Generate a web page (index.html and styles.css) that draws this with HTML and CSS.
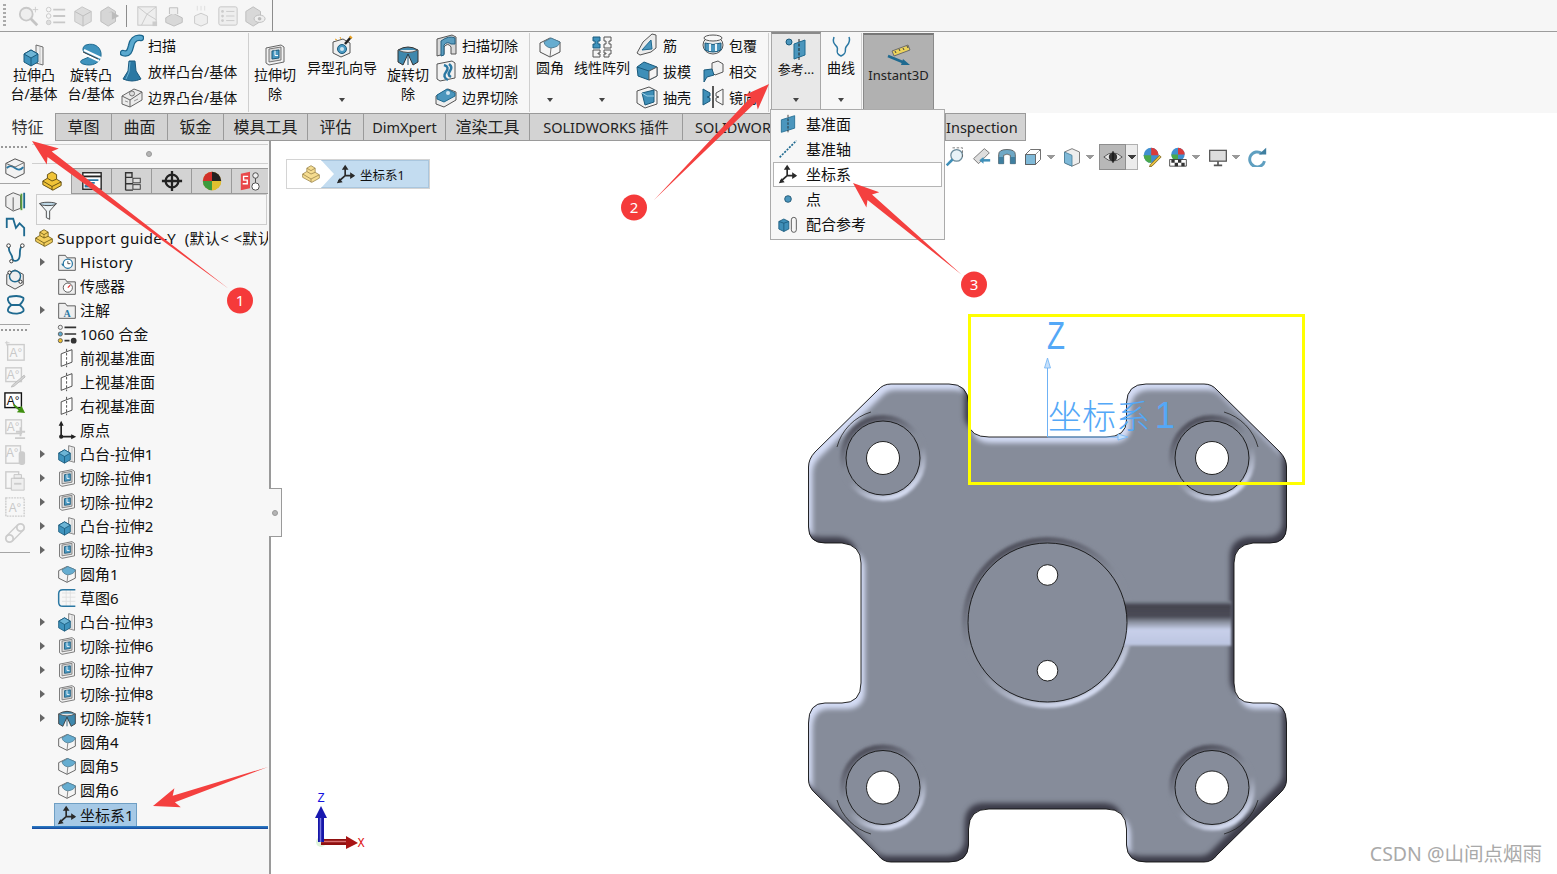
FILE: index.html
```html
<!DOCTYPE html>
<html lang="zh-CN">
<head>
<meta charset="utf-8">
<title>SOLIDWORKS</title>
<link rel="stylesheet" href="styles.css">
</head>
<body>
<svg class="defs" aria-hidden="true">
  <symbol id="i-boss" viewBox="0 0 24 24"><path d="M14 2l7 2v18l-7-2z" fill="#f0f0f0" stroke="#6d6d6d"/><path d="M18 4v17" stroke="#bbb"/><path d="M2 11l7-4 7 4v8l-7 4-7-4z" fill="#3f93bd" stroke="#1a5a7c"/><path d="M2 11l7 4 7-4-7-4z" fill="#6db5d6" stroke="#1a5a7c"/><path d="M9 15v8" stroke="#1a5a7c"/></symbol>
  <symbol id="i-rev" viewBox="0 0 24 24"><path d="M7 2c9-3 16 3 15 11-1 7-9 11-18 8-3-1-3-3-1-4l7-3L5 9C3 7 4 3 7 2z" fill="#3f93bd" stroke="#1f6a90"/><path d="M3 10l17 8M5 7l17 8" stroke="#fff" stroke-width="2"/><path d="M4 9l15 7" stroke="#444"/></symbol>
  <symbol id="i-sweep" viewBox="0 0 24 24"><path d="M3 20c6 2 7-3 8-7 1-5 4-9 10-8" fill="none" stroke="#1b668d" stroke-width="6.5" stroke-linecap="round"/><path d="M3 20c6 2 7-3 8-7 1-5 4-9 10-8" fill="none" stroke="#5aa9cf" stroke-width="4" stroke-linecap="round"/></symbol>
  <symbol id="i-loft" viewBox="0 0 24 24"><path d="M9 2h6l1 10 5 8q-9 4-18 0l5-8z" fill="#2b78a3" stroke="#1b5a7f"/><path d="M10 3l-1 10-3 7" fill="none" stroke="#69b0d2"/></symbol>
  <symbol id="i-bound" viewBox="0 0 24 24"><path d="M2 11l12-7 8 3v8l-12 7-8-3z" fill="#ececec" stroke="#666"/><path d="M2 11l8 4 12-8M10 15v7" fill="none" stroke="#666"/><circle cx="12" cy="8.500" r="2.500" fill="#ddd" stroke="#777"/><path d="M5 16l3 1M14 16l4-2" stroke="#999"/></symbol>
  <symbol id="i-cut" viewBox="0 0 24 24"><path d="M3 5l15-3 3 2v15l-15 3-3-2z" fill="#f2f2f2" stroke="#666"/><path d="M6 6l12-2v13l-12 2z" fill="#d8d8d8" stroke="#777"/><path d="M9 8l7-1v8l-7 1z" fill="#4b9ac3" stroke="#1a5a7c"/><path d="M12 7.500v5h3" fill="none" stroke="#fff"/></symbol>
  <symbol id="i-wiz" viewBox="0 0 24 24"><path d="M3 7l10-3 7 4v10l-9 4-8-4z" fill="#efefef" stroke="#555"/><circle cx="12" cy="14" r="4.500" fill="#4b9ac3" stroke="#1a5a7c"/><circle cx="12" cy="14" r="2" fill="#cfe5f1"/><path d="M15 9l6-7" stroke="#222" stroke-width="2.500"/><path d="M20 3l1.500-1.500" stroke="#e8a020" stroke-width="3"/><path d="M10 2l1 2M5 4l2 1" stroke="#e8a020"/></symbol>
  <symbol id="i-revcut" viewBox="0 0 24 24"><path d="M2 7q10-6 20 0v12l-5 3-5-11-5 11-5-3z" fill="#3f88ad" stroke="#333"/><path d="M2 7q10 5 20 0" fill="#e8e8e8" stroke="#555"/><path d="M12 11v11" stroke="#1a4f6c"/></symbol>
  <symbol id="i-swcut" viewBox="0 0 24 24"><path d="M3 6l15-4 4 2v17h-5v-7q-3-5-7 0v7l-7 2z" fill="#d9d9d9" stroke="#555"/><path d="M7 8q8-6 14-3v6h-4q-4-3-7 1v10l-3 1z" fill="#5b9dbf" stroke="#235f80"/></symbol>
  <symbol id="i-locut" viewBox="0 0 24 24"><path d="M3 5l15-3 3 2v15l-15 3-3-2z" fill="#f1f1f1" stroke="#555"/><path d="M10 6q6 2 2 7t2 8M15 5q4 3 1 7t1 6" fill="none" stroke="#2b78a3" stroke-width="2.500"/></symbol>
  <symbol id="i-bocut" viewBox="0 0 24 24"><path d="M2 11l12-7 8 3v8l-12 7-8-3z" fill="#eee" stroke="#555"/><path d="M3 10l10-6 8 4v3l-11 6-7-3z" fill="#4b96bd" stroke="#1f6a90"/><circle cx="14" cy="8" r="2" fill="#cfe5f1"/></symbol>
  <symbol id="i-fillet" viewBox="0 0 24 24"><path d="M2 8l10-5 10 4v10l-10 5-10-5z" fill="#f5f5f5" stroke="#4f4f4f"/><path d="M6 7l7-4 9 4q-1 5-9 6-6-1-7-6z" fill="#66add0" stroke="#4f7f98"/><path d="M13 13l-1 9" stroke="#777"/></symbol>
  <symbol id="i-pat" viewBox="0 0 24 24"><path d="M3 2h7v4H8v3h2v4H3v-4h2V6H3z" fill="#3f93bd" stroke="#1a5a7c"/><path d="M14 2h7v4h-2v3h2v4h-7V9h2V6h-2zM14 15h7v4h-2v3h-5v-3h2v-1h-2zM3 15h7v3H8v1h2v3H3z" fill="#f5f5f5" stroke="#555"/></symbol>
  <symbol id="i-rib" viewBox="0 0 24 24"><path d="M2 20l6-11 9-8 4 1v13l-5 4-11 3z" fill="#ececec" stroke="#555"/><path d="M7 17l9-10 1 9z" fill="#4b96bd" stroke="#1f6a90"/></symbol>
  <symbol id="i-draft" viewBox="0 0 24 24"><path d="M2 8l7-5 13 5v9l-8 4-11-4z" fill="#3f8fb8" stroke="#1a5a7c"/><path d="M14 12l8-4v9l-8 4z" fill="#f4f4f4" stroke="#555"/><path d="M2 8l12 4" stroke="#1a5a7c"/></symbol>
  <symbol id="i-shell" viewBox="0 0 24 24"><path d="M2 6l12-4 8 4v13l-12 4-8-5z" fill="#f3f3f3" stroke="#555"/><path d="M7 8l12-3v12l-9 3z" fill="#3f8fb8" stroke="#1a5a7c"/><path d="M7 8l5 3h7" fill="none" stroke="#9fd0e6"/></symbol>
  <symbol id="i-wrap" viewBox="0 0 24 24"><ellipse cx="12" cy="12" rx="10" ry="9" fill="#ececec" stroke="#555"/><ellipse cx="12" cy="5" rx="9" ry="3" fill="#f7f7f7" stroke="#555"/><path d="M4 10q8 3 16 0v7q-8 4-16 0z" fill="#4b96bd" stroke="#1a5a7c"/><path d="M9 11v7M15 11v7" stroke="#e9f4fa" stroke-width="2"/></symbol>
  <symbol id="i-inter" viewBox="0 0 24 24"><path d="M11 4l6-2 5 3v8l-8 3-3-3z" fill="#f1f1f1" stroke="#555"/><path d="M3 11l8-1 2 6-7 2-3 5z" fill="#3f8fb8" stroke="#1a5a7c"/></symbol>
  <symbol id="i-mirror" viewBox="0 0 24 24"><path d="M2 4l7 4v3l-3 1 3 1v3l-7 4z" fill="#3f8fb8" stroke="#1a5a7c"/><path d="M22 4l-7 4v3l3 1-3 1v3l7 4z" fill="#f7f7f7" stroke="#555"/><path d="M12 1v22" stroke="#222" stroke-width="1.500"/></symbol>
  <symbol id="i-ref" viewBox="0 0 24 24"><circle cx="5" cy="5" r="3" fill="#4b96bd" stroke="#1a5a7c"/><path d="M10 7l11-4v15l-11 4z" fill="#4b96bd" stroke="#1f6a90"/><path d="M15 2v21" stroke="#222" stroke-dasharray="3 1.500"/></symbol>
  <symbol id="i-curve" viewBox="0 0 24 24"><path d="M5 2c-2 6 1 7 3 10s-3 6 4 9c7-3 3-6 5-9s5-5 3-10" fill="none" stroke="#2b78a3" stroke-width="1.500"/></symbol>
  <symbol id="i-3d" viewBox="0 0 24 24"><path d="M5 8l16-6 2 5L7 13z" fill="#ecd35a" stroke="#6b6b6b"/><path d="M8 8l1 2M12 6l1 2M16 5l1 2M20 3l1 2" stroke="#444"/><path d="M1 13l17 7" stroke="#1f6a90" stroke-width="2.500"/><path d="M16 16l7 6-9 0z" fill="#1f6a90"/></symbol>
  <symbol id="i-plane" viewBox="0 0 24 24"><path d="M4 7l16-5v15L4 22z" fill="#4b96bd" stroke="#1f6a90"/><path d="M12 1v22" stroke="#222" stroke-dasharray="3 1.500"/></symbol>
  <symbol id="i-axis" viewBox="0 0 24 24"><path d="M2 22L22 2" stroke="#1f6a90" stroke-width="2" stroke-dasharray="2.500 1.500"/></symbol>
  <symbol id="i-coord" viewBox="0 0 24 24"><path d="M11 14V5M11 14h10M11 14l-8 7" fill="none" stroke="#2a2a2a" stroke-width="2"/><path d="M11 1l-4 6h8zM23 14l-6-4v8zM1 23l7-1-4-5z" fill="#2a2a2a"/></symbol>
  <symbol id="i-point" viewBox="0 0 24 24"><circle cx="12" cy="12" r="4" fill="#4b96bd" stroke="#1a4f6c"/></symbol>
  <symbol id="i-mate" viewBox="0 0 24 24"><path d="M1 9l6-3 6 3v9l-6 3-6-3z" fill="#3f8fb8" stroke="#1a5a7c"/><path d="M7 11v10M1 9l6 2 6-2" stroke="#1a5a7c" fill="none"/><path d="M16 7a3 3 0 0 1 6 0v12a3 3 0 0 1-6 0V7" fill="none" stroke="#444"/></symbol>
  <symbol id="i-part" viewBox="0 0 24 24"><path d="M2 12l5-3V5l5-3 5 3v5l5 3v4l-9 5-11-6z" fill="#f3cf5e" stroke="#6f5a14"/><path d="M2 12l10 6 10-5M12 18v4M7 9l5 3 5-2M12 12v-3M7 5l5 3 5-3" fill="none" stroke="#6f5a14"/></symbol>
  <symbol id="i-partpale" viewBox="0 0 24 24"><path d="M2 12l5-3V5l5-3 5 3v5l5 3v4l-9 5-11-6z" fill="#f5dc90" stroke="#a08a50"/><path d="M2 12l10 6 10-5M12 18v4M7 9l5 3 5-2M7 5l5 3 5-3" fill="none" stroke="#a08a50"/></symbol>
  <symbol id="i-hist" viewBox="0 0 24 24"><path d="M2 4h8l2 3h10v15H2z" fill="#eee" stroke="#444"/><circle cx="13" cy="14" r="5.500" fill="#fff" stroke="#2b78a3" stroke-width="1.500"/><path d="M13 11v3h3" fill="none" stroke="#333"/><path d="M5 14l3 0-1 3z" fill="#2b78a3"/></symbol>
  <symbol id="i-sensor" viewBox="0 0 24 24"><path d="M2 4h8l2 3h10v15H2z" fill="#eee" stroke="#444"/><circle cx="13" cy="14" r="5.500" fill="#fff" stroke="#444"/><path d="M13 14l3-3" stroke="#d33" stroke-width="1.500"/></symbol>
  <symbol id="i-mat" viewBox="0 0 24 24"><circle cx="4" cy="4" r="2.500" fill="#eee" stroke="#555"/><circle cx="4" cy="12" r="2.500" fill="#5aa9cf" stroke="#555"/><circle cx="4" cy="20" r="2.500" fill="#f0c030" stroke="#555"/><path d="M9 4h14M9 12h14M9 20h6" stroke="#333" stroke-width="2"/><circle cx="20" cy="20" r="3.500" fill="#333"/></symbol>
  <symbol id="i-tplane" viewBox="0 0 24 24"><path d="M5 7l13-5v15L5 22z" fill="#fff" stroke="#333"/><path d="M11.500 1v22" stroke="#333" stroke-dasharray="3 2"/></symbol>
  <symbol id="i-origin" viewBox="0 0 24 24"><path d="M5 20V5M5 20h15" stroke="#222" stroke-width="2"/><path d="M5 1l-3 6h6zM23 20l-6-3v6z" fill="#222"/><circle cx="5" cy="20" r="2.500" fill="#222"/></symbol>
  <symbol id="i-sketch" viewBox="0 0 24 24"><path d="M6 6h16M6 11h16M6 16h16M11 2v20M16 2v20" stroke="#ddd"/><path d="M22 2H7Q2 2 2 7v10q0 5 5 5h15" fill="none" stroke="#2b78a3" stroke-width="1.800"/></symbol>
  <symbol id="i-fm" viewBox="0 0 24 24"><path d="M2 7l10-5 10 4v12l-10 5-10-5z" fill="#f2f2f2" stroke="#444"/><path d="M3 12q4-4 9 0t9-1" fill="none" stroke="#2b78a3" stroke-width="2"/><path d="M2 7l10 4 10-5" fill="none" stroke="#666"/></symbol>
  <symbol id="i-s1" viewBox="0 0 24 24"><path d="M2 7l8-4 8 3v14l-8 3-8-5z" fill="#eee" stroke="#555"/><path d="M19 4v18" stroke="#5a9e3c" stroke-width="2"/><path d="M22 3v17" stroke="#1f6a90" stroke-width="2"/><path d="M10 8v14" stroke="#555"/></symbol>
  <symbol id="i-s2" viewBox="0 0 24 24"><path d="M3 13V3h7l3 10 4-5 5 5v9" fill="none" stroke="#1f6a90" stroke-width="2"/></symbol>
  <symbol id="i-s3" viewBox="0 0 24 24"><path d="M6 4c-3 6 3 9 3 13 0 5 7 5 8-1 1-5-1-9 3-12" fill="none" stroke="#1f6a90" stroke-width="2"/><circle cx="5" cy="4" r="2" fill="#fff" stroke="#333"/><circle cx="20" cy="4" r="2" fill="#fff" stroke="#333"/><circle cx="8" cy="21" r="1.800" fill="#fff" stroke="#333"/></symbol>
  <symbol id="i-s4" viewBox="0 0 24 24"><path d="M3 7l9-5 9 5v11l-9 5-9-5z" fill="#eee" stroke="#444"/><circle cx="12" cy="9" r="6" fill="none" stroke="#1f6a90" stroke-width="1.500"/><circle cx="6" cy="5" r="1.800" fill="#fff" stroke="#222"/><circle cx="18" cy="15" r="1.800" fill="#fff" stroke="#222"/></symbol>
  <symbol id="i-s5" viewBox="0 0 24 24"><path d="M6 3c-3 1-2 6 2 9-4 3-5 7-2 8 5 2 12 2 15-1 1-2-1-5-4-7 3-3 5-6 4-8-3-2-10-2-15-1zM8 12h9" fill="none" stroke="#1f6a90" stroke-width="2"/></symbol>
  <symbol id="i-a6" viewBox="0 0 24 24"><rect x="2" y="2" width="14" height="18" fill="none" stroke="#ccc" stroke-width="1.500"/><path d="M8 9h14v13H8zM11 5h8v4h-8z" fill="#eee" stroke="#c4c4c4"/><path d="M11 15h8" stroke="#ccc" stroke-width="2"/></symbol>
  <symbol id="i-a8" viewBox="0 0 24 24"><circle cx="6" cy="18" r="4" fill="none" stroke="#ccc" stroke-width="2"/><circle cx="18" cy="6" r="4" fill="none" stroke="#ccc" stroke-width="2"/><path d="M2 16L15 3M9 21L22 8" stroke="#ccc" stroke-width="1.500"/></symbol>
  <symbol id="i-q1" viewBox="0 0 24 24"><circle cx="9" cy="10" r="7" fill="#eee" stroke="#c8c8c8" stroke-width="2"/><path d="M14 15l7 7" stroke="#c4c4c4" stroke-width="3"/><path d="M19 2v6M16 5h6" stroke="#ccc"/></symbol>
  <symbol id="i-q2" viewBox="0 0 24 24"><circle cx="4" cy="5" r="2.500" fill="none" stroke="#c8c8c8"/><circle cx="4" cy="12" r="2.500" fill="none" stroke="#c8c8c8"/><circle cx="4" cy="19" r="2.500" fill="#ddd" stroke="#c8c8c8"/><path d="M9 5h13M9 12h13M9 19h13" stroke="#c8c8c8" stroke-width="2"/></symbol>
  <symbol id="i-q3" viewBox="0 0 24 24"><path d="M3 7l8-5 10 5v11l-9 5-9-5z" fill="#ddd" stroke="#c4c4c4"/><path d="M3 7l9 5 9-5M12 12v11" fill="none" stroke="#bbb"/></symbol>
  <symbol id="i-q4" viewBox="0 0 24 24"><path d="M2 7l8-5 8 5v11l-8 5-8-5z" fill="#d6d6d6" stroke="#bbb"/><path d="M10 8h4v8l8-4-8-5" fill="#bbb"/></symbol>
  <symbol id="i-q5" viewBox="0 0 24 24"><rect x="2" y="2" width="20" height="20" fill="#eee" stroke="#c4c4c4"/><path d="M2 2l10 8 10-8M12 10l-6 12M12 10l10 6" stroke="#c8c8c8" fill="none"/><rect x="18" y="18" width="5" height="5" fill="#ccc"/></symbol>
  <symbol id="i-q6" viewBox="0 0 24 24"><path d="M3 14l8-5 10 5v5l-9 4-9-4z" fill="#d8d8d8" stroke="#bbb"/><path d="M7 10V3h9v7" fill="#eee" stroke="#bbb"/></symbol>
  <symbol id="i-q7" viewBox="0 0 24 24"><path d="M5 12l7-3 7 3v8l-7 3-7-3z" fill="#eee" stroke="#c8c8c8"/><path d="M8 1v5M12 1v5M16 1v5" stroke="#ddd"/></symbol>
  <symbol id="i-q8" viewBox="0 0 24 24"><rect x="2" y="2" width="20" height="20" rx="2" fill="#eee" stroke="#c4c4c4"/><path d="M10 7h9M10 12h9M10 17h9" stroke="#c8c8c8"/><circle cx="6" cy="7" r="1.500" fill="#ccc"/><circle cx="6" cy="12" r="1.500" fill="#ccc"/><circle cx="6" cy="17" r="1.500" fill="#ccc"/></symbol>
  <symbol id="i-q9" viewBox="0 0 24 24"><path d="M2 7l8-5 8 5v11l-8 5-8-5z" fill="#d8d8d8" stroke="#bbb"/><ellipse cx="17" cy="15" rx="6" ry="4" fill="#eee" stroke="#bbb"/><circle cx="17" cy="15" r="2" fill="#bbb"/></symbol>
  <symbol id="i-t1" viewBox="0 0 24 24"><path d="M2 12l5-3V5l5-3 5 3v5l5 3v4l-9 5-11-6z" fill="#f0c338" stroke="#5f4c10"/><path d="M2 12l10 6 10-5M12 18v4M7 9l5 3 5-2" fill="none" stroke="#5f4c10"/></symbol>
  <symbol id="i-t2" viewBox="0 0 24 24"><rect x="2" y="3" width="20" height="18" fill="#fff" stroke="#222" stroke-width="1.500"/><path d="M2 7h20" stroke="#222" stroke-width="2"/><path d="M5 11h14M5 14h10" stroke="#2b78a3" stroke-width="2"/><rect x="4" y="16" width="6" height="3" fill="#2b78a3"/></symbol>
  <symbol id="i-t3" viewBox="0 0 24 24"><path d="M5 3h7v5H5zM5 8v14M5 15h8M5 22h8" fill="none" stroke="#333" stroke-width="1.500"/><rect x="13" y="9" width="8" height="5" fill="#ddd" stroke="#333"/><rect x="13" y="16" width="8" height="5" fill="#ddd" stroke="#333"/></symbol>
  <symbol id="i-t4" viewBox="0 0 24 24"><circle cx="12" cy="12" r="7" fill="none" stroke="#222" stroke-width="2.500"/><path d="M12 1v22M1 12h22" stroke="#222" stroke-width="2.500"/></symbol>
  <symbol id="i-t5" viewBox="0 0 24 24"><circle cx="12" cy="12" r="10" fill="#d8a020"/><path d="M12 2a10 10 0 0 1 10 10H12z" fill="#222"/><path d="M2 12a10 10 0 0 1 10-10v10z" fill="#d2302a"/><path d="M2 12a10 10 0 0 0 10 10v-10z" fill="#3c9a3c"/><path d="M22 12a10 10 0 0 1-10 10v-10z" fill="#e0c030"/></symbol>
  <symbol id="i-t6" viewBox="0 0 24 24"><path d="M2 4l10-2v18l-10 2z" fill="#e8484a"/><path d="M10 7H5v4h4v4H4" fill="none" stroke="#fff" stroke-width="1.500"/><circle cx="18" cy="6" r="3" fill="#eee" stroke="#444"/><path d="M18 9v6" stroke="#444"/><circle cx="18" cy="18" r="4" fill="#fff" stroke="#444"/></symbol>
  <symbol id="i-filter" viewBox="0 0 24 24"><path d="M2 3h20l-8 9v10l-4-2v-8z" fill="#eef4f7" stroke="#333"/><ellipse cx="12" cy="3.500" rx="10" ry="2" fill="#bcd7e6" stroke="#333"/></symbol>
  <symbol id="i-v1" viewBox="0 0 24 24"><circle cx="14" cy="10" r="7" fill="#e8f2f7" stroke="#6a8a9a" stroke-width="1.500"/><path d="M9 15l-7 7" stroke="#3f8fb8" stroke-width="3"/><path d="M9 1h12v12" fill="none" stroke="#666" stroke-dasharray="3 2"/></symbol>
  <symbol id="i-v2" viewBox="0 0 24 24"><path d="M3 14L16 2l6 5-13 13z" fill="#ddd" stroke="#666"/><path d="M13 16h10" stroke="#3f8fb8" stroke-width="3"/><path d="M10 16l5-4v8z" fill="#3f8fb8"/></symbol>
  <symbol id="i-v3" viewBox="0 0 24 24"><path d="M2 20V9q0-6 10-6t10 6v11h-6V10q-4-3-8 0v10z" fill="#6fa8c5" stroke="#555"/><path d="M2 12h6v8H2zM16 12h6v8h-6z" fill="#3f7fa0"/></symbol>
  <symbol id="i-v4" viewBox="0 0 24 24"><path d="M3 9l6-6h12v12l-6 6H3z" fill="#fff" stroke="#555"/><path d="M3 9h12v12H3z" fill="#7fb9d8" stroke="#555"/><path d="M15 9l6-6" stroke="#555" stroke-dasharray="2 1"/></symbol>
  <symbol id="i-v5" viewBox="0 0 24 24"><path d="M3 6l9-4 9 4v13l-9 4-9-4z" fill="#eee" stroke="#666"/><path d="M3 6l9 4v13l-9-4z" fill="#7fb9d8" stroke="#4a7f9a"/></symbol>
  <symbol id="i-v6" viewBox="0 0 24 24"><path d="M1 12q11-10 22 0-11 10-22 0z" fill="#e2e2e2" stroke="#444"/><circle cx="12" cy="12" r="5" fill="#333"/><path d="M12 5v14" stroke="#111" stroke-width="1.500"/></symbol>
  <symbol id="i-v7" viewBox="0 0 24 24"><circle cx="11" cy="10" r="9" fill="#3f8fd0"/><path d="M11 1a9 9 0 0 1 9 9H11z" fill="#d93a3a"/><path d="M2 10a9 9 0 0 0 9 9v-9z" fill="#4aa84a"/><path d="M23 12L12 23l-3 1 1-3L21 10z" fill="#e8c040" stroke="#7a6420"/></symbol>
  <symbol id="i-v8" viewBox="0 0 24 24"><circle cx="12" cy="9" r="8" fill="#3f8fd0"/><path d="M12 1a8 8 0 0 1 8 8h-8z" fill="#d93a3a"/><path d="M4 9a8 8 0 0 0 8 8V9z" fill="#4aa84a"/><path d="M2 15h20v8H2z" fill="#fff" stroke="#333"/><path d="M4 15h4v4H4zM12 15h4v4h-4zM8 19h4v4H8zM16 19h4v4h-4z" fill="#333"/></symbol>
  <symbol id="i-v9" viewBox="0 0 24 24"><rect x="2" y="4" width="20" height="13" fill="#ddd" stroke="#555" stroke-width="1.500"/><path d="M12 17v4M7 22h10" stroke="#555" stroke-width="2"/></symbol>
  <symbol id="i-v10" viewBox="0 0 24 24"><path d="M18 8a9 9 0 1 0 3 9" fill="none" stroke="#5f9fc0" stroke-width="3.500"/><path d="M14 9h9V1z" fill="#3f7fa0"/></symbol>
</svg>

<div class="app">
  <header class="qbar">
    <div class="qbar-left">
      <span class="grip-v"></span>
      <svg class="qi"><use href="#i-q1"/></svg>
      <svg class="qi"><use href="#i-q2"/></svg>
      <svg class="qi"><use href="#i-q3"/></svg>
      <svg class="qi"><use href="#i-q4"/></svg>
      <span class="qsep"></span>
      <svg class="qi"><use href="#i-q5"/></svg>
      <svg class="qi"><use href="#i-q6"/></svg>
      <svg class="qi"><use href="#i-q7"/></svg>
      <svg class="qi"><use href="#i-q8"/></svg>
      <svg class="qi"><use href="#i-q9"/></svg>
    </div>
  </header>

  <section class="ribbon">
    <div class="big w58 first"><svg class="ic20"><use href="#i-boss"/></svg><span>拉伸凸<br>台/基体</span></div>
    <div class="big w56"><svg class="ic20"><use href="#i-rev"/></svg><span>旋转凸<br>台/基体</span></div>
    <div class="small w129">
      <div class="sm"><svg class="ic20"><use href="#i-sweep"/></svg>扫描</div>
      <div class="sm"><svg class="ic20"><use href="#i-loft"/></svg>放样凸台/基体</div>
      <div class="sm"><svg class="ic20"><use href="#i-bound"/></svg>边界凸台/基体</div>
    </div>
    <span class="rsep"></span>
    <div class="big w52"><svg class="ic20"><use href="#i-cut"/></svg><span>拉伸切<br>除</span></div>
    <div class="big w82 top"><svg class="ic20"><use href="#i-wiz"/></svg><span>异型孔向导</span><i class="caret"></i></div>
    <div class="big w50"><svg class="ic20"><use href="#i-revcut"/></svg><span>旋转切<br>除</span></div>
    <div class="small w96">
      <div class="sm"><svg class="ic20"><use href="#i-swcut"/></svg>扫描切除</div>
      <div class="sm"><svg class="ic20"><use href="#i-locut"/></svg>放样切割</div>
      <div class="sm"><svg class="ic20"><use href="#i-bocut"/></svg>边界切除</div>
    </div>
    <span class="rsep"></span>
    <div class="big w40 top"><svg class="ic20"><use href="#i-fillet"/></svg><span>圆角</span><i class="caret"></i></div>
    <div class="big w64 top"><svg class="ic20"><use href="#i-pat"/></svg><span>线性阵列</span><i class="caret"></i></div>
    <div class="small w66">
      <div class="sm"><svg class="ic20"><use href="#i-rib"/></svg>筋</div>
      <div class="sm"><svg class="ic20"><use href="#i-draft"/></svg>拔模</div>
      <div class="sm"><svg class="ic20"><use href="#i-shell"/></svg>抽壳</div>
    </div>
    <div class="small w68">
      <div class="sm"><svg class="ic20"><use href="#i-wrap"/></svg>包覆</div>
      <div class="sm"><svg class="ic20"><use href="#i-inter"/></svg>相交</div>
      <div class="sm"><svg class="ic20"><use href="#i-mirror"/></svg>镜向</div>
    </div>
    <span class="rsep"></span>
    <div class="big w50 top pressed"><svg class="ic20"><use href="#i-ref"/></svg><span class="sz13">参考...</span><i class="caret"></i></div>
    <div class="big w40 top"><svg class="ic20"><use href="#i-curve"/></svg><span>曲线</span><i class="caret"></i></div>
    <span class="rsep"></span>
    <div class="big w71 inst"><svg class="ic20"><use href="#i-3d"/></svg><span>Instant3D</span></div>
  </section>

  <nav class="tabs">
    <span class="tab active t55">特征</span>
    <span class="tab t56">草图</span>
    <span class="tab t56">曲面</span>
    <span class="tab t56">钣金</span>
    <span class="tab t84">模具工具</span>
    <span class="tab t56">评估</span>
    <span class="tab t82 lat">DimXpert</span>
    <span class="tab t84">渲染工具</span>
    <span class="tab t153 lat">SOLIDWORKS 插件</span>
    <span class="tab t263 lat left">SOLIDWORKS MBD</span>
    <span class="tab t80 lat end">Inspection</span>
  </nav>

  <div class="workspace">
    <aside class="side">
      <div class="strip">
        <span class="grip"></span>
        <svg class="si"><use href="#i-fm"/></svg>
        <span class="ssep"></span>
        <svg class="si"><use href="#i-s1"/></svg>
        <svg class="si"><use href="#i-s2"/></svg>
        <svg class="si"><use href="#i-s3"/></svg>
        <svg class="si"><use href="#i-s4"/></svg>
        <svg class="si"><use href="#i-s5"/></svg>
        <span class="ssep mid"></span>
        <span class="grip"></span>
        <svg class="si first-a" viewBox="0 0 24 24"><rect x="4" y="5" width="18" height="17" fill="none" stroke="#ccc" stroke-width="1.500"/><text x="13" y="19" class="ag off">A°</text><path d="M3 1v5M1 3h5" stroke="#ccc"/></svg>
        <svg class="si" viewBox="0 0 24 24"><rect x="2" y="2" width="17" height="15" fill="none" stroke="#ccc" stroke-width="1.500"/><text x="10" y="14" class="ag off">A°</text><path d="M22 10L9 21l-1 2 3-1L23 12z" fill="#d5d5d5" stroke="#bbb"/></svg>
        <svg class="si" viewBox="0 0 24 24"><rect x="1" y="1" width="18" height="16" fill="#fff" stroke="#111" stroke-width="1.500"/><text x="10" y="14" class="ag">A°</text><path d="M11 13l6 5 2-3 4 8-9-1 2-2-6-5z" fill="#3f8f10"/></svg>
        <svg class="si" viewBox="0 0 24 24"><rect x="2" y="2" width="17" height="15" fill="none" stroke="#ccc" stroke-width="1.500"/><text x="10" y="14" class="ag off">A°</text><path d="M13 15h10M18 10v10M12 22h11" stroke="#ccc" stroke-width="2"/></svg>
        <svg class="si" viewBox="0 0 24 24"><rect x="2" y="2" width="16" height="19" fill="none" stroke="#ccc" stroke-width="1.500"/><text x="9" y="14" class="ag off">A°</text><rect x="16" y="8" width="7" height="15" rx="3" fill="#ccc"/></svg>
        <svg class="si"><use href="#i-a6"/></svg>
        <svg class="si" viewBox="0 0 24 24"><rect x="2" y="2" width="20" height="20" fill="none" stroke="#ccc" stroke-width="1.500" stroke-dasharray="2 1"/><text x="12" y="17" class="ag off">A°</text></svg>
        <svg class="si"><use href="#i-a8"/></svg>
        <span class="ssep mid"></span>
      </div>
      <div class="fm">
        <div class="fm-head"><span class="dot"></span></div>
        <div class="fm-tabs">
          <span class="ft on"><svg class="ic22"><use href="#i-t1"/></svg></span>
          <span class="ft"><svg class="ic22"><use href="#i-t2"/></svg></span>
          <span class="ft"><svg class="ic22"><use href="#i-t3"/></svg></span>
          <span class="ft"><svg class="ic22"><use href="#i-t4"/></svg></span>
          <span class="ft"><svg class="ic22"><use href="#i-t5"/></svg></span>
          <span class="ft last"><svg class="ic22"><use href="#i-t6"/></svg></span>
        </div>
        <div class="filter"><svg class="ic20"><use href="#i-filter"/></svg></div>
        <div class="tree">
          <div class="row root"><svg class="ti"><use href="#i-part"/></svg><span class="ls">Support guide-Y&nbsp; (默认&lt; &lt;默认</span></div>
          <div class="row"><i class="tw"></i><svg class="ti"><use href="#i-hist"/></svg><span class="ls">History</span></div>
          <div class="row"><i class="tw no"></i><svg class="ti"><use href="#i-sensor"/></svg><span>传感器</span></div>
          <div class="row"><i class="tw"></i><svg class="ti" viewBox="0 0 24 24"><path d="M2 4h8l2 3h10v15H2z" fill="#eee" stroke="#444"/><text x="12" y="20" class="af">A</text></svg><span>注解</span></div>
          <div class="row"><i class="tw no"></i><svg class="ti"><use href="#i-mat"/></svg><span>1060 合金</span></div>
          <div class="row"><i class="tw no"></i><svg class="ti"><use href="#i-tplane"/></svg><span>前视基准面</span></div>
          <div class="row"><i class="tw no"></i><svg class="ti"><use href="#i-tplane"/></svg><span>上视基准面</span></div>
          <div class="row"><i class="tw no"></i><svg class="ti"><use href="#i-tplane"/></svg><span>右视基准面</span></div>
          <div class="row"><i class="tw no"></i><svg class="ti"><use href="#i-origin"/></svg><span>原点</span></div>
          <div class="row"><i class="tw"></i><svg class="ti"><use href="#i-boss"/></svg><span>凸台-拉伸1</span></div>
          <div class="row"><i class="tw"></i><svg class="ti"><use href="#i-cut"/></svg><span>切除-拉伸1</span></div>
          <div class="row"><i class="tw"></i><svg class="ti"><use href="#i-cut"/></svg><span>切除-拉伸2</span></div>
          <div class="row"><i class="tw"></i><svg class="ti"><use href="#i-boss"/></svg><span>凸台-拉伸2</span></div>
          <div class="row"><i class="tw"></i><svg class="ti"><use href="#i-cut"/></svg><span>切除-拉伸3</span></div>
          <div class="row"><i class="tw no"></i><svg class="ti"><use href="#i-fillet"/></svg><span>圆角1</span></div>
          <div class="row"><i class="tw no"></i><svg class="ti"><use href="#i-sketch"/></svg><span>草图6</span></div>
          <div class="row"><i class="tw"></i><svg class="ti"><use href="#i-boss"/></svg><span>凸台-拉伸3</span></div>
          <div class="row"><i class="tw"></i><svg class="ti"><use href="#i-cut"/></svg><span>切除-拉伸6</span></div>
          <div class="row"><i class="tw"></i><svg class="ti"><use href="#i-cut"/></svg><span>切除-拉伸7</span></div>
          <div class="row"><i class="tw"></i><svg class="ti"><use href="#i-cut"/></svg><span>切除-拉伸8</span></div>
          <div class="row"><i class="tw"></i><svg class="ti"><use href="#i-revcut"/></svg><span>切除-旋转1</span></div>
          <div class="row"><i class="tw no"></i><svg class="ti"><use href="#i-fillet"/></svg><span>圆角4</span></div>
          <div class="row"><i class="tw no"></i><svg class="ti"><use href="#i-fillet"/></svg><span>圆角5</span></div>
          <div class="row"><i class="tw no"></i><svg class="ti"><use href="#i-fillet"/></svg><span>圆角6</span></div>
          <div class="row"><i class="tw no"></i><div class="sel"><svg class="ti"><use href="#i-coord"/></svg><span>坐标系1</span></div></div>
        </div>
        <div class="tree-end"></div>
      </div>
      <div class="split"><span class="dot"></span></div>
    </aside>

    <main class="canvas">
      <svg class="model" viewBox="271 141 1286 733" aria-hidden="true">
        <defs>
          <path id="outline" d="M891 384L949 384Q968 384 968.500 403L968.500 423Q970 437 989 437L1106 437Q1126.500 437 1126.500 420L1126.500 403Q1127 384 1146 384L1204 384Q1212 384 1217 390L1280 452Q1286.500 459 1286.500 467L1286.500 527Q1286.500 543 1270 543L1253 543Q1234 545 1234 563L1234 683Q1234 703 1253 703L1270 703Q1286.500 703 1286.500 723L1286.500 780Q1286.500 787 1280 793L1217 855Q1212 862 1204 862L1146 862Q1127 862 1126.500 845L1126.500 829Q1126 809 1106 809L989 809Q969 809 968.500 829L968.500 845Q968 862 949 862L891 862Q883 862 878 855L815 793Q808.500 787 808.500 780L808.500 723Q808.500 703 825 703L842 703Q861 703 861 683L861 563Q861 545 842 543L825 543Q808.500 543 808.500 527L808.500 467Q808.500 459 815 452L878 390Q883 384 891 384Z"/>
          <filter id="bevel" x="-6%" y="-6%" width="112%" height="112%" color-interpolation-filters="sRGB">
            <feFlood flood-color="#000" result="flood"/>
            <feComposite in="flood" in2="SourceAlpha" operator="out" result="inv"/>
            <feOffset in="inv" dx="4" dy="6" result="o1"/>
            <feGaussianBlur in="o1" stdDeviation="2.600" result="b1"/>
            <feFlood flood-color="#d4dcf5"/>
            <feComposite in2="b1" operator="in"/>
            <feComposite in2="SourceAlpha" operator="in" result="light"/>
            <feOffset in="inv" dx="-4" dy="-6" result="o2"/>
            <feGaussianBlur in="o2" stdDeviation="2.600" result="b2"/>
            <feFlood flood-color="#3d3d4a"/>
            <feComposite in2="b2" operator="in"/>
            <feComposite in2="SourceAlpha" operator="in" result="dark"/>
            <feMerge><feMergeNode in="SourceGraphic"/><feMergeNode in="light"/><feMergeNode in="dark"/></feMerge>
          </filter>
          <filter id="soft" x="-20%" y="-20%" width="140%" height="140%"><feGaussianBlur stdDeviation="1.500"/></filter>
          <filter id="soft2" x="-5%" y="-10%" width="110%" height="120%"><feGaussianBlur stdDeviation="0.800"/></filter>
          <linearGradient id="ring" x1="0.200" y1="0" x2="0.700" y2="1">
            <stop offset="0" stop-color="#474753"/><stop offset="0.450" stop-color="#868c9a"/><stop offset="0.600" stop-color="#868c9a"/><stop offset="1" stop-color="#dbe2f8"/>
          </linearGradient>
          <linearGradient id="slot" x1="0" y1="0" x2="0" y2="1">
            <stop offset="0" stop-color="#868c9a"/><stop offset="0.100" stop-color="#44444f"/><stop offset="0.340" stop-color="#4a4a56"/><stop offset="0.460" stop-color="#868c9a"/><stop offset="0.640" stop-color="#c8d0ea"/><stop offset="0.980" stop-color="#bcc5e0"/><stop offset="1" stop-color="#868c9a"/>
          </linearGradient>
        </defs>
        <use href="#outline" fill="#868c9a" filter="url(#bevel)"/>
        <g fill="none" stroke="url(#ring)" stroke-width="6" filter="url(#soft)">
          <circle cx="883" cy="458" r="40"/><circle cx="1212" cy="458" r="40"/><circle cx="883" cy="787.500" r="40"/><circle cx="1212" cy="787.500" r="40"/><circle cx="1047.500" cy="622.500" r="82.500"/>
        </g>
        <rect x="1118" y="601" width="113" height="45" fill="url(#slot)" filter="url(#soft2)"/>
        <g fill="#868c9a" stroke="#111" stroke-width="0.900">
          <circle cx="883" cy="458" r="37"/><circle cx="1212" cy="458" r="37"/><circle cx="883" cy="787.500" r="37"/><circle cx="1212" cy="787.500" r="37"/><circle cx="1047.500" cy="622.500" r="79.500"/>
        </g>
        <g fill="#fff" stroke="#111" stroke-width="0.900">
          <circle cx="883" cy="458" r="16.500"/><circle cx="1212" cy="458" r="16.500"/><circle cx="883" cy="787.500" r="16.500"/><circle cx="1212" cy="787.500" r="16.500"/><circle cx="1047.500" cy="575" r="10.300"/><circle cx="1047.500" cy="670.700" r="10.300"/>
        </g>
        <g fill="none" stroke="#222" stroke-width="0.800">
          <path d="M837 447A50 50 0 0 1 871 412M1224 412A50 50 0 0 1 1258 447M837 800A50 50 0 0 0 871 834M1224 834A50 50 0 0 0 1258 800"/>
        </g>
        <use href="#outline" fill="none" stroke="#111" stroke-width="0.900"/>

        <g class="csys">
          <path d="M1047.500 437V366M1047.500 437H1125" class="csys-line"/>
          <path d="M1047.500 358l-3 10h6zM1128 437l-10-3v6z" class="csys-head"/>
          <text x="1047" y="349" font-size="38" textLength="18" lengthAdjust="spacingAndGlyphs" class="csys-z">Z</text>
          <text x="1048" y="429" class="csys-name">坐标系</text>
          <text x="1155" y="428" class="csys-num">1</text>
        </g>
        <rect x="969.500" y="315.500" width="334" height="168" fill="none" stroke="#ffff00" stroke-width="3"/>

        <g class="triad">
          <circle cx="321" cy="842" r="5" fill="#dff3da"/>
          <path d="M321 842H347" stroke="#8f1010" stroke-width="6"/>
          <path d="M321 841.500H346" stroke="#d87070" stroke-width="1.500"/>
          <path d="M358 843l-12-7v13z" fill="#a81414"/>
          <path d="M321 842V818" stroke="#1616a8" stroke-width="6"/>
          <path d="M320.500 842V818" stroke="#7a7ae0" stroke-width="1.500"/>
          <path d="M321 806l-6 12h12z" fill="#1818b0"/>
          <text x="321" y="802" class="tz">Z</text>
          <text x="361" y="847" class="tx">X</text>
        </g>
      </svg>

      <div class="crumbs">
        <span class="crumb-home"><svg class="ic20"><use href="#i-partpale"/></svg></span>
        <span class="crumb-cur"><svg class="ic20"><use href="#i-coord"/></svg><b>坐标系1</b></span>
      </div>

      <div class="hud">
        <svg class="hi"><use href="#i-v1"/></svg>
        <svg class="hi"><use href="#i-v2"/></svg>
        <svg class="hi"><use href="#i-v3"/></svg>
        <svg class="hi"><use href="#i-v4"/></svg>
        <i class="hc"></i>
        <svg class="hi m3"><use href="#i-v5"/></svg>
        <i class="hc"></i>
        <span class="hbtn"><svg class="ic20"><use href="#i-v6"/></svg></span><span class="hdd"><i class="hc dark"></i></span>
        <svg class="hi m1"><use href="#i-v7"/></svg>
        <svg class="hi"><use href="#i-v8"/></svg>
        <i class="hc"></i>
        <svg class="hi m4"><use href="#i-v9"/></svg>
        <i class="hc"></i>
        <svg class="hi m3"><use href="#i-v10"/></svg>
      </div>

      <div class="mark">CSDN @山间点烟雨</div>
    </main>
  </div>

  <div class="menu">
    <div class="mi"><svg class="ic20"><use href="#i-plane"/></svg>基准面</div>
    <div class="mi"><svg class="ic20"><use href="#i-axis"/></svg>基准轴</div>
    <div class="mi cur"><svg class="ic20"><use href="#i-coord"/></svg>坐标系</div>
    <div class="mi"><svg class="ic20"><use href="#i-point"/></svg>点</div>
    <div class="mi"><svg class="ic20"><use href="#i-mate"/></svg>配合参考</div>
  </div>

  <svg class="notes" viewBox="0 0 1557 874" aria-hidden="true">
    <g class="arrow">
      <polygon points="229,289 51.700,151.400 58.800,148.600 32,141 46.800,164.600 47.500,157"/>
      <polygon points="654,200 756,102 757.800,109.600 769,84 743.600,95.500 751,97.100"/>
      <polygon points="962,275 872,194.500 879.300,192.200 853,183 866.400,207.400 867.500,199.900"/>
      <polygon points="268,767 174.900,802.300 180.800,807.200 153,806 174.400,788.200 172.700,795.700"/>
    </g>
    <circle class="pin" cx="240" cy="300.500" r="13"/><text class="pin-t" x="240" y="305.500">1</text>
    <circle class="pin" cx="634" cy="207.500" r="13"/><text class="pin-t" x="634" y="212.500">2</text>
    <circle class="pin" cx="974" cy="284.500" r="13"/><text class="pin-t" x="974" y="289.500">3</text>
  </svg>
</div>
</body>
</html>
```
FILE: styles.css
```css
* { box-sizing: border-box; }
html, body { margin: 0; padding: 0; }
body {
  width: 1557px;
  height: 874px;
  overflow: hidden;
  background: #fff;
  color: #1a1a1a;
  font-family: "Noto Sans", "Noto Sans CJK SC", sans-serif;
}
.defs { position: absolute; width: 0; height: 0; }
.app { position: relative; width: 1557px; height: 874px; display: flex; flex-direction: column; }

.ic20 { width: 20px; height: 20px; flex: none; display: block; }
.ic22 { width: 22px; height: 22px; display: block; }

/* quick toolbar */
.qbar { height: 32px; background: #f6f6f6; border-bottom: 1px solid #9c9c9c; flex: none; }
.qbar-left { width: 273px; height: 31px; border-right: 1px solid #8c8c8c; display: flex; align-items: center; }
.grip-v { width: 3px; height: 24px; margin: 0 9px 0 3px; background: repeating-linear-gradient(#aaa 0 2px, transparent 2px 4px); }
.qi { width: 22px; height: 22px; margin: 0 2.500px; flex: none; }
.qsep { width: 1px; height: 22px; background: #8c8c8c; margin: 0 6px 0 3px; }

/* ribbon */
.ribbon { height: 81px; flex: none; background: #f7f7f7; display: flex; font-size: 14px; line-height: 19px; color: #111; }
.ribbon .ic20 { width: 24px; height: 24px; margin: -2px; }
.big { display: flex; flex-direction: column; align-items: center; padding-top: 13px; text-align: center; white-space: nowrap; flex: none; }
.big.first { margin-left: 5px; }
.big.top { padding-top: 5px; }
.big.top span { margin-top: 1px; }
.caret { margin-top: auto; margin-bottom: 11px; width: 0; height: 0; border: 3.500px solid transparent; border-top: 4px solid #444; border-bottom: 0; }
.w40 { width: 40px; } .w50 { width: 50px; } .w52 { width: 52px; }
.w56 { width: 56px; } .w58 { width: 58px; } .w64 { width: 64px; } .w66 { width: 66px; }
.w68 { width: 68px; } .w71 { width: 71px; } .w82 { width: 82px; } .w96 { width: 96px; } .w129 { width: 129px; }
.small { flex: none; padding: 1px 0 0 3px; }
.sm { height: 26px; padding-bottom: 2px; display: flex; align-items: center; gap: 6px; white-space: nowrap; font-size: 14px; }
.rsep { flex: none; width: 1px; margin: 1px 0; background: #cfcfcf; }
.pressed { background: #e8e8e8; border: 1px solid #a8a8a8; border-top: 2px solid #8a8a8a; border-bottom: 0; margin-left: 2px; }
.sz13 { font-size: 13px; }
.inst { background: #b1b1b1; border: 1px solid #8a8a8a; border-top: 2px solid #777; margin: 1px 0 0 1px; padding-top: 10px; height: 80px; }
.inst span { font-size: 13px; color: #222; margin-top: 1px; }

/* tabs */
.tabs { height: 28px; flex: none; display: flex; background: #fff; }
.tab { height: 28px; padding-bottom: 2px; display: flex; align-items: center; justify-content: center; background: #d3d3d3; border: 1px solid #9a9a9a; border-left: 0; font-size: 16px; color: #222; white-space: nowrap; flex: none; }
.tab.lat { font-size: 14.500px; padding-bottom: 1px; }
.tab.active { background: #f7f7f7; color: #333; border-top: 0; border-bottom: 0; }
.tab.left { justify-content: flex-start; padding-left: 12px; }
.tab.end { justify-content: flex-start; padding-left: 0; }
.t55 { width: 56px; } .t56 { width: 56px; } .t82 { width: 82px; } .t84 { width: 84px; }
.t153 { width: 153px; } .t263 { width: 263px; } .t80 { width: 80px; }

/* workspace */
.workspace { flex: 1; display: flex; min-height: 0; }
.side { position: relative; z-index: 2; width: 271px; flex: none; display: flex; background: #f7f7f7; border-right: 2px solid #9a9a9a; }

.strip { width: 32px; flex: none; display: flex; flex-direction: column; align-items: center; padding-top: 2px; }
.grip { width: 28px; height: 8px; margin-left: -2px; flex: none; background: radial-gradient(circle at 1px 4px, #999 1px, transparent 1.300px) 0 0 / 4px 8px repeat-x; }
.si { width: 26px; height: 26px; padding: 2px; flex: none; margin-left: -2px; }
.strip > .si:first-of-type { margin-top: 4px; }
.ssep { width: 30px; height: 1px; background: #a5a5a5; flex: none; margin: 2px 0 4px -2px; }
.ssep.mid { margin: 6px 0 1px -2px; }
.first-a { margin-top: 4px; }
.ag { font: 13px "Liberation Sans", sans-serif; text-anchor: middle; fill: #111; }
.ag.off { fill: #c8c8c8; }
.af { font: 700 12px "Liberation Serif", serif; text-anchor: middle; fill: #2b78a3; }

.fm { width: 236px; flex: none; overflow: hidden; }
.fm-head { height: 20px; margin-top: 3px; margin-bottom: 1px; border-top: 1px solid #cfcfcf; border-bottom: 1px solid #cfcfcf; display: flex; align-items: center; justify-content: center; padding-right: 2px; }
.dot { width: 6px; height: 6px; border-radius: 50%; background: #b4b4b4; border: 1px solid #999; display: block; }
.fm-tabs { display: flex; height: 26px; margin-top: 4px; }
.ft { width: 40px; height: 26px; display: flex; align-items: center; justify-content: center; background: #d3d3d3; border: 1px solid #9a9a9a; border-left: 0; }
.ft.on { background: #f7f7f7; border: 0; border-right: 1px solid #9a9a9a; }
.ft.last { width: 36px; border-right: 0; }
.filter { margin: 0 1px 0 4px; height: 31px; background: #f7f7f7; border: 1px solid #cdcdcd; padding: 6px 0 0 1px; }
.tree { font-size: 15px; line-height: 24px; margin-top: 1px; }
.row { height: 24px; display: flex; align-items: center; white-space: nowrap; color: #111; }
.row.root { padding-left: 2px; }
.ls { letter-spacing: .35px; }
.ti { width: 20px; height: 20px; flex: none; margin-right: 3px; }
.tw { width: 17px; flex: none; height: 10px; margin-left: 8px; display: block; }
.tw::before { content: ""; display: block; width: 0; height: 0; margin-top: 1px; border: 4px solid transparent; border-left: 5px solid #666; border-right: 0; }
.tw.no::before { display: none; }
.sel { display: flex; align-items: center; height: 23px; margin-left: -3px; padding-left: 2px; width: 83px; background: #a6c9e6; border: 1px solid #6f9fc4; border-bottom: 0; }
.tree-end { height: 3px; background: linear-gradient(#2f82c8, #14469c); }
.split { position: absolute; left: 269px; top: 347px; width: 13px; height: 49px; background: #f7f7f7; border: 1px solid #9a9a9a; border-left: 0; display: flex; align-items: center; justify-content: flex-end; padding-right: 3px; }

/* canvas */
.canvas { position: relative; flex: 1; background: #fff; overflow: hidden; }
.model { position: absolute; left: 0; top: 0; width: 1286px; height: 733px; }
.csys-line { fill: none; stroke: #6fb2f5; stroke-width: 1; }
.csys-head { fill: #c6e0fa; stroke: #6fb2f5; stroke-width: .8; }
.csys-z { fill: #54a8f7; font-family: "Liberation Sans", sans-serif; }
.csys-name { fill: #54a8f7; font-family: "Noto Sans CJK SC", sans-serif; font-size: 34px; font-weight: 300; }
.csys-num { fill: #54a8f7; font-family: "Liberation Sans", sans-serif; font-size: 36px; }
.tz { fill: #1414e0; font: 12px "Liberation Mono", monospace; text-anchor: middle; }
.tx { fill: #e01414; font: 12px "Liberation Mono", monospace; text-anchor: middle; }

.crumbs { position: absolute; left: 15px; top: 18px; width: 144px; height: 30px; display: flex; background: #fff; border: 1px solid #d4d4d4; }
.crumb-home { width: 34px; flex: none; display: flex; align-items: center; padding-left: 14px; }
.crumb-cur { flex: 1; display: flex; align-items: center; padding-left: 15px; gap: 4px; background: #c3dcf0; clip-path: polygon(0 0, 100% 0, 100% 100%, 0 100%, 13px 50%); border: 1px solid #a9c6de; border-left: 0; }
.crumb-cur b { font-weight: 400; font-size: 12.500px; color: #111; white-space: nowrap; }

.hud { position: absolute; left: 671px; top: 3px; height: 26px; display: flex; align-items: center; }
.hi { width: 26px; height: 26px; padding: 3px; flex: none; }
.m1 { margin-left: 1px; } .m3 { margin-left: 3px; } .m4 { margin-left: 4px; }
.hc { width: 10px; flex: none; height: 4px; display: block; background: linear-gradient(135deg, transparent 48%, #999 49%) left / 5px 4px no-repeat, linear-gradient(225deg, transparent 48%, #999 49%) right / 5px 4px no-repeat; transform: scaleY(-1); }
.hc.dark { filter: brightness(.4); }
.hbtn { margin-left: 4px; width: 27px; height: 26px; background: #b8b8b8; border: 1px solid #8e8e8e; display: flex; align-items: center; justify-content: center; }
.hdd { width: 12px; height: 26px; background: #ececec; border: 1px solid #b0b0b0; border-left: 0; display: flex; align-items: center; justify-content: center; }

.mark { position: absolute; right: 15px; bottom: 7px; font-size: 19.500px; color: #a9a9a9; white-space: nowrap; }

/* dropdown */
.menu { position: absolute; left: 770px; top: 109px; width: 175px; height: 131px; padding: 2px; background: #f7f7f7; border: 1px solid #ababab; font-size: 15px; color: #111; }
.mi { height: 25px; padding: 0 0 2px 5px; display: flex; align-items: center; gap: 8px; white-space: nowrap; }
.mi.cur { background: #fff; border: 1px solid #b4b4b4; padding-left: 4px; }

/* annotations */
.notes { position: absolute; left: 0; top: 0; width: 1557px; height: 874px; pointer-events: none; z-index: 3; }
.arrow polygon { fill: #f4403f; }
.pin { fill: #f53a3a; }
.pin-t { fill: #fff; font: 15px "Noto Sans", sans-serif; text-anchor: middle; }
```
